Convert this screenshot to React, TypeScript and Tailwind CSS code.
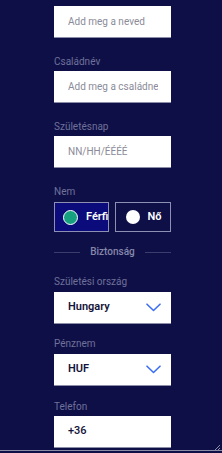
import React from 'react';

const Label: React.FC<{ text: string; className?: string }> = ({ text, className }) => (
    <div className={`text-[10px] leading-[12px] text-[#6f7199] ${className ?? ''}`}>{text}</div>
);

const TextInput: React.FC<{ placeholder?: string; value?: string }> = ({ placeholder, value }) => (
    <div className="h-[31px] bg-white shadow-[0_1px_0_#8c8ea8] flex items-center pl-[14px] pr-[13px]">
        {value ? (
            <span className="text-[11px] font-medium text-[#14143a] whitespace-nowrap">{value}</span>
        ) : (
            <span className="text-[10px] text-[#8b8b99] whitespace-nowrap overflow-hidden">{placeholder}</span>
        )}
    </div>
);

const Chevron = () => (
    <svg width="15" height="9" viewBox="0 0 15 9" fill="none">
        <path d="M1 1.2 L7.5 7.5 L14 1.2" stroke="#3d6ff2" strokeWidth="1.6" strokeLinecap="round" strokeLinejoin="round" />
    </svg>
);

const Select: React.FC<{ value: string }> = ({ value }) => (
    <div className="h-[31px] bg-white shadow-[0_1px_0_#8c8ea8] flex items-center justify-between pl-[14px] pr-[10px]">
        <span className="text-[11px] font-semibold text-[#14143a]">{value}</span>
        <Chevron />
    </div>
);

export default function App() {
    return (
        <div
            className="relative h-[453px] w-[222px] overflow-hidden bg-[#0e0f47]"
            style={{ fontFamily: 'Roboto, "Liberation Sans", sans-serif' }}
        >
            <div className="ml-[54px] w-[117px] pt-[6px]">
                <TextInput placeholder="Add meg a neved" />

                <Label text="Családnév" className="mt-[19px] mb-[3px]" />
                <TextInput placeholder="Add meg a családnevet" />

                <Label text="Születésnap" className="mt-[19px] mb-[3px]" />
                <TextInput placeholder="NN/HH/ÉÉÉÉ" />

                <Label text="Nem" className="mt-[19px] mb-[4px]" />
                <div className="flex gap-[6px] h-[30px]">
                    <div className="flex-1 flex items-center gap-[8px] pl-[8px] bg-[#0b0b7c] border border-[#8d8fb3] overflow-hidden">
                        <span className="w-[15px] h-[15px] shrink-0 rounded-full bg-[#17a07f] border-[1.5px] border-white" />
                        <span className="text-[11px] font-semibold text-white">Férfi</span>
                    </div>
                    <div className="flex-1 flex items-center gap-[8px] pl-[10px] border border-[#8d8fb3]">
                        <span className="w-[14px] h-[14px] shrink-0 rounded-full bg-white" />
                        <span className="text-[11px] font-semibold text-white">Nő</span>
                    </div>
                </div>

                <div className="flex items-center gap-[10px] mt-[14px]">
                    <div className="flex-1 h-px bg-[#3b3d6c]" />
                    <span className="text-[10px] leading-[12px] font-medium text-[#8688ab]">Biztonság</span>
                    <div className="flex-1 h-px bg-[#3b3d6c]" />
                </div>

                <Label text="Születési ország" className="mt-[18px] mb-[4px]" />
                <Select value="Hungary" />

                <Label text="Pénznem" className="mt-[15px] mb-[4px]" />
                <Select value="HUF" />

                <Label text="Telefon" className="mt-[16px] mb-[3px]" />
                <TextInput value="+36" />
            </div>

            <div className="absolute left-0 right-0 bottom-0 h-[3px] border-t border-[#8a8ca6] bg-[#0e0f47]" />
            <svg className="absolute right-[1px] bottom-[1px]" width="8" height="8" viewBox="0 0 8 8">
                <path d="M7 1 L1 7 M7 4 L4 7" stroke="#8a8ca6" strokeWidth="1" />
            </svg>
        </div>
    );
}
